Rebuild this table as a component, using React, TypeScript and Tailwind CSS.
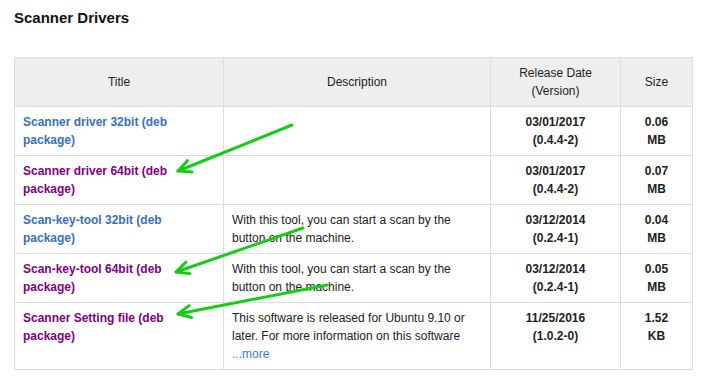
import React from "react";

type Row = {
  title: string;
  visited: boolean;
  desc?: React.ReactNode;
  date: string;
  version: string;
  size: string;
  unit: string;
};

const rows: Row[] = [
  { title: "Scanner driver 32bit (deb package)", visited: false, date: "03/01/2017", version: "(0.4.4-2)", size: "0.06", unit: "MB" },
  { title: "Scanner driver 64bit (deb package)", visited: true, date: "03/01/2017", version: "(0.4.4-2)", size: "0.07", unit: "MB" },
  {
    title: "Scan-key-tool 32bit (deb package)",
    visited: false,
    desc: "With this tool, you can start a scan by the button on the machine.",
    date: "03/12/2014",
    version: "(0.2.4-1)",
    size: "0.04",
    unit: "MB",
  },
  {
    title: "Scan-key-tool 64bit (deb package)",
    visited: true,
    desc: "With this tool, you can start a scan by the button on the machine.",
    date: "03/12/2014",
    version: "(0.2.4-1)",
    size: "0.05",
    unit: "MB",
  },
  {
    title: "Scanner Setting file (deb package)",
    visited: true,
    desc: (
      <>
        This software is released for Ubuntu 9.10 or later. For more information on this software
        <br />
        <a href="#" className="text-[#3a7bd5]">...more</a>
      </>
    ),
    date: "11/25/2016",
    version: "(1.0.2-0)",
    size: "1.52",
    unit: "KB",
  },
];

// green annotation arrows: [startX, startY, tipX, tipY]
const arrows = [
  [292, 125, 178, 171],
  [303, 228, 176, 272],
  [327, 285, 178, 314],
];

function wings(x1: number, y1: number, x2: number, y2: number) {
  const a = Math.atan2(y1 - y2, x1 - x2);
  const len = 14;
  const s = 0.45;
  const p1 = [x2 + len * Math.cos(a + s), y2 + len * Math.sin(a + s)];
  const p2 = [x2 + len * Math.cos(a - s), y2 + len * Math.sin(a - s)];
  return `${p1[0]},${p1[1]} ${x2},${y2} ${p2[0]},${p2[1]}`;
}

const App = () => {
  return (
    <div className="relative w-[701px] h-[379px] bg-white overflow-hidden font-['Liberation_Sans',Arial,sans-serif] text-[#222]">
      <h2 className="ml-[14px] pt-[9px] text-[15px] leading-[17px] font-bold text-[#111]">Scanner Drivers</h2>

      <table className="ml-[14px] mt-[31px] w-[678px] table-fixed border-collapse text-[12px] leading-[18px]">
        <colgroup>
          <col className="w-[209px]" />
          <col className="w-[267px]" />
          <col className="w-[130px]" />
          <col className="w-[72px]" />
        </colgroup>
        <thead>
          <tr className="bg-[#eeeeee]">
            <th className="border border-[#dddddd] px-2 py-1.5 font-normal align-middle">Title</th>
            <th className="border border-[#dddddd] px-2 py-1.5 font-normal align-middle">Description</th>
            <th className="border border-[#dddddd] px-2 py-1.5 font-normal align-middle">
              Release Date
              <br />
              (Version)
            </th>
            <th className="border border-[#dddddd] px-2 py-1.5 font-normal align-middle">Size</th>
          </tr>
        </thead>
        <tbody>
          {rows.map((r) => (
            <tr key={r.title}>
              <td className="border border-[#dddddd] px-2 py-1.5 align-top">
                <a href="#" className={r.visited ? "font-bold text-[#800080]" : "font-bold text-[#3a70b6]"}>
                  {r.title}
                </a>
              </td>
              <td className="border border-[#dddddd] px-2 py-1.5 align-top">{r.desc}</td>
              <td className="border border-[#dddddd] px-2 py-1.5 align-top text-center font-bold">
                {r.date}
                <br />
                {r.version}
              </td>
              <td className="border border-[#dddddd] px-2 py-1.5 align-top text-center font-bold">
                {r.size}
                <br />
                {r.unit}
              </td>
            </tr>
          ))}
        </tbody>
      </table>

      <svg className="absolute left-0 top-0 pointer-events-none" width="701" height="379">
        {arrows.map(([x1, y1, x2, y2], i) => (
          <g key={i} stroke="#16cc16" strokeWidth="3" fill="none" strokeLinecap="round" strokeLinejoin="round">
            <line x1={x1} y1={y1} x2={x2} y2={y2} />
            <polyline points={wings(x1, y1, x2, y2)} />
          </g>
        ))}
      </svg>
    </div>
  );
};

export default App;
